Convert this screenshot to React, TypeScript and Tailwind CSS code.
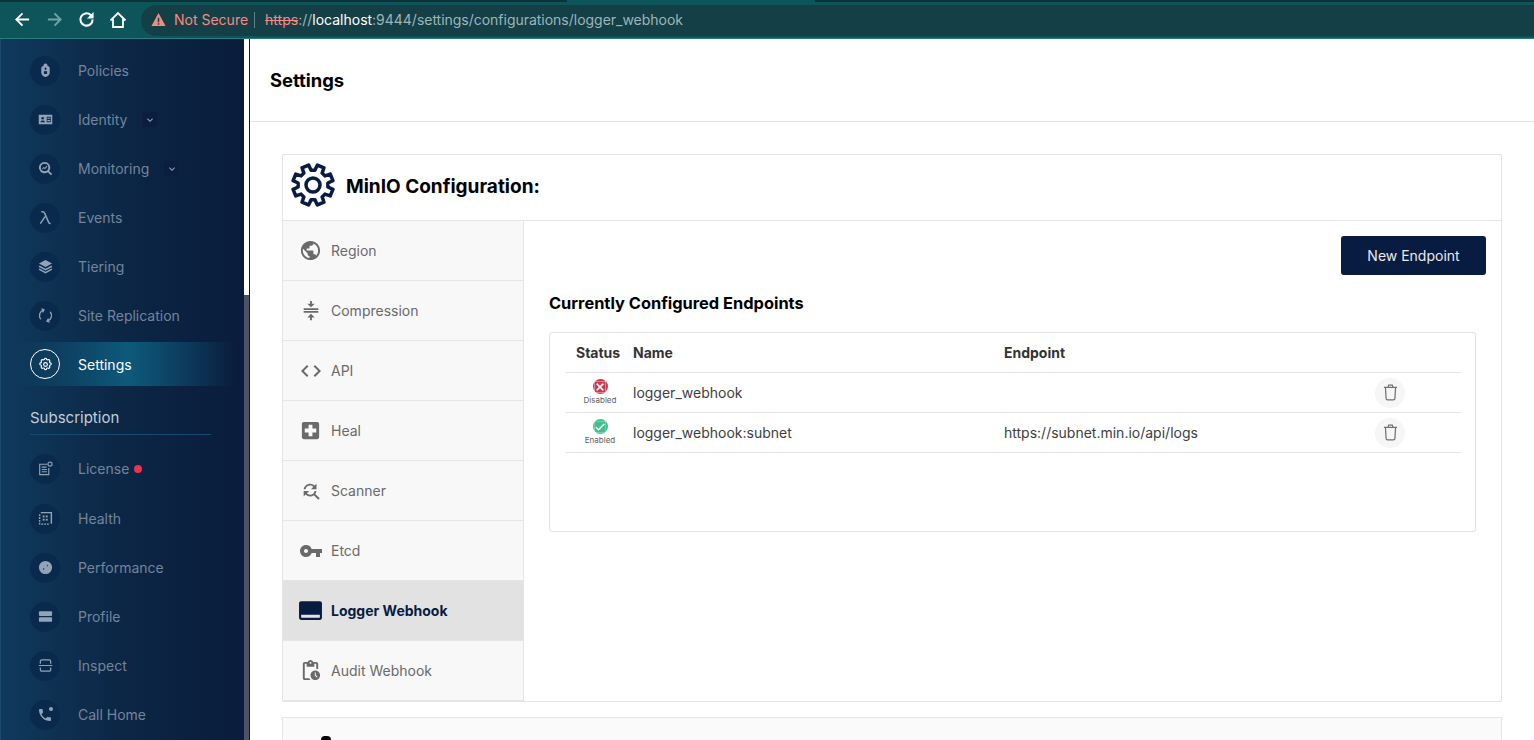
import React from "react";
import {
  MdPublic, MdCompress, MdCode, MdLocalHospital, MdFindReplace, MdVpnKey, MdCallToAction, MdPendingActions,
  MdExpandMore, MdPhone, MdCheck, MdClose,
} from "react-icons/md";

const Svg = ({ children }: { children: React.ReactNode }) => (
  <svg viewBox="0 0 16 16" className="w-[15px] h-[15px]" fill="currentColor">{children}</svg>
);

const PolicyIcon = () => (
  <Svg>
    <path d="M5.800 2.800a2.200 2.200 0 0 1 4.400 0V3.300c1.400.4 2.300 1.200 2.300 2.300v4.900c0 2.600-2.300 3.900-4.500 4.500-2.200-.6-4.500-1.900-4.500-4.500V5.600c0-1.100.9-1.900 2.300-2.300z" />
    <rect x="7" y="4.800" width="2" height="2.600" rx="1" fill="#0b2c50" />
    <rect x="6.300" y="8.700" width="3.400" height="3" fill="#0b2c50" />
  </Svg>
);
const IdentityIcon = () => (
  <Svg>
    <path fillRule="evenodd" d="M.8 3h14.400v10H.8zM9.300 5v6h4.400V5z" />
    <circle cx="5" cy="6.600" r="1.400" fill="#0b2c50" />
    <path d="M2.600 11c0-2.500 4.800-2.500 4.800 0z" fill="#0b2c50" />
    <path d="M10 6h3v1.200h-3zM10 8.600h3v1.200h-3z" />
  </Svg>
);
const MonitoringIcon = () => (
  <Svg>
    <path fillRule="evenodd" d="M7 1a6 6 0 0 1 4.800 9.600l3.400 3.300-1.400 1.400-3.300-3.400A6 6 0 1 1 7 1zm0 2a4 4 0 1 0 0 8 4 4 0 0 0 0-8z" />
    <path d="M4.300 8.300 6 6.300l1.300 1 2-2.200.8.700-2.700 3-1.300-1-1.100 1.300z" />
  </Svg>
);
const LambdaIcon = () => (
  <svg viewBox="0 0 16 16" className="w-[15px] h-[15px]" fill="none" stroke="currentColor" strokeWidth="1.600">
    <path d="M2.500 14.500 7.500 7M3.500 1.800h1.500c1 0 1.700.5 2.100 1.500L11.300 13c.4 1 1 1.500 2.200 1.500" />
  </svg>
);
const TieringIcon = () => (
  <Svg>
    <path d="M8 1 15 4.800 8 8.600 1 4.800z" />
    <path d="M1.500 6.900 8 10.400l6.500-3.500.7 1.500L8 12.300.8 8.400z" />
    <path d="M1.500 10 8 13.500l6.500-3.500.7 1.500L8 15.400.8 11.500z" />
  </Svg>
);
const SiteRepIcon = () => (
  <svg viewBox="0 0 16 16" className="w-[15px] h-[15px]" fill="none" stroke="currentColor" strokeWidth="1.400">
    <path d="M3 12A6.400 6.400 0 0 1 6 1.900M13 4A6.400 6.400 0 0 1 10 14.100" />
    <path d="M3.600.8 6.400 2 4.800 4.600M12.400 15.200 9.600 14 11.200 11.400" />
  </svg>
);
const SettingsSmallIcon = () => (
  <svg viewBox="0 0 24 24" className="w-[15px] h-[15px]" fill="none" stroke="#fff" strokeWidth="1.800">
    <circle cx="12" cy="12" r="3" />
    <path d="M10.300 3.300c.4-1.800 3-1.800 3.400 0a1.700 1.700 0 0 0 2.600 1.100c1.500-1 3.400.9 2.400 2.400a1.700 1.700 0 0 0 1.100 2.600c1.800.4 1.800 3 0 3.400a1.700 1.700 0 0 0-1.100 2.600c1 1.500-.9 3.400-2.400 2.400a1.700 1.700 0 0 0-2.600 1.100c-.4 1.800-3 1.800-3.400 0a1.700 1.700 0 0 0-2.600-1.100c-1.500 1-3.400-.9-2.400-2.400a1.700 1.700 0 0 0-1.100-2.600c-1.800-.4-1.800-3 0-3.400a1.700 1.700 0 0 0 1.100-2.600c-1-1.500.9-3.400 2.400-2.400a1.700 1.700 0 0 0 2.600-1.100z" />
  </svg>
);
const LicenseIcon = () => (
  <svg viewBox="0 0 16 16" className="w-[15px] h-[15px]" fill="none" stroke="currentColor" strokeWidth="1.200">
    <path d="M10 3.500H1.800v11h9.700V7.500" />
    <path d="M4 6.500h5M4 9h5.500M4 11.500h5.500" />
    <circle cx="12.800" cy="3.300" r="2.200" />
  </svg>
);
const HealthIcon = () => (
  <Svg>
    <path d="M3 1h12v12.500h-1.500V2.500H3z" />
    <path d="M1 3.500h1.500v1.800H1zM1 6.500h1.500v2H1zM1 9.500h1.500v2H1zM1 12.500h1.500v2H1zM3.500 13.200h2v1.400h-2zM6.500 13.200h2v1.400h-2zM9.500 13.200h2v1.400h-2z" />
    <rect x="5" y="4.800" width="2" height="2" />
    <rect x="8.300" y="4.800" width="2" height="2" />
    <rect x="5" y="8.300" width="2" height="2" />
    <rect x="8.300" y="8.300" width="2" height="2" />
  </Svg>
);
const PerformanceIcon = () => (
  <Svg>
    <path fillRule="evenodd" d="M8 1a7 7 0 1 1 0 14A7 7 0 0 1 8 1zM10 5l-.7.500.8 1.300.7-.500zM6 8.700a.8.800 0 1 0 0 1.600.8.800 0 0 0 0-1.600z" />
  </Svg>
);
const ProfileIcon = () => (
  <Svg>
    <rect x="1" y="2.500" width="14" height="5" rx="1" />
    <rect x="1" y="8.700" width="14" height="5" rx="1" />
  </Svg>
);
const InspectIcon = () => (
  <svg viewBox="0 0 16 16" className="w-[15px] h-[15px]" fill="none" stroke="currentColor" strokeWidth="1.300">
    <path d="M2.500 6V3.500a1.500 1.500 0 0 1 1.500-1.500h8a1.500 1.500 0 0 1 1.500 1.500V6M2.500 10v2.500A1.500 1.500 0 0 0 4 14h8a1.500 1.500 0 0 0 1.500-1.500V10M.8 8h14.400" />
  </svg>
);
const CallHomeIcon = () => (
  <span className="relative flex">
    <MdPhone size={16} />
    <span className="absolute right-0 top-0 w-[4px] h-[4px] rounded-full bg-current" />
  </span>
);

const gearPoints = Array.from({ length: 8 }, (_, i) => {
  const t = (i * Math.PI) / 4 + Math.PI / 8;
  const p = (r: number, d: number) => {
    const a = t + (d * Math.PI) / 180;
    return `${(22 + r * Math.cos(a)).toFixed(2)},${(22 + r * Math.sin(a)).toFixed(2)}`;
  };
  return [p(15, -15), p(20.4, -10), p(20.4, 10), p(15, 15)].join(" ");
}).join(" ");

const BigGear = () => (
  <svg viewBox="0 0 44 44" className="w-[44px] h-[44px] mb-[6px] text-[#081c42]" fill="none" stroke="currentColor" strokeWidth="3.500" strokeLinejoin="round">
    <polygon points={gearPoints} />
    <circle cx="22" cy="22" r="7" />
  </svg>
);

type Item = { label: string; icon: React.ReactNode; chevron?: boolean; dot?: boolean; h: string };

const topItems: Item[] = [
  { label: "Policies", icon: <PolicyIcon />, h: "h-[49px]" },
  { label: "Identity", icon: <IdentityIcon />, chevron: true, h: "h-[49px]" },
  { label: "Monitoring", icon: <MonitoringIcon />, chevron: true, h: "h-[49px]" },
  { label: "Events", icon: <LambdaIcon />, h: "h-[49px]" },
  { label: "Tiering", icon: <TieringIcon />, h: "h-[49px]" },
  { label: "Site Replication", icon: <SiteRepIcon />, h: "h-[49px]" },
];
const bottomItems: Item[] = [
  { label: "License", icon: <LicenseIcon />, dot: true, h: "h-[51px]" },
  { label: "Health", icon: <HealthIcon />, h: "h-[49px]" },
  { label: "Performance", icon: <PerformanceIcon />, h: "h-[49px]" },
  { label: "Profile", icon: <ProfileIcon />, h: "h-[49px]" },
  { label: "Inspect", icon: <InspectIcon />, h: "h-[49px]" },
  { label: "Call Home", icon: <CallHomeIcon />, h: "h-[49px]" },
];

const NavRow = ({ item }: { item: Item }) => (
  <div className={`${item.h} flex items-center pl-[29px]`}>
    <span className="w-[30px] h-[30px] rounded-full bg-[#0a2a4d] flex items-center justify-center text-[#93a3b6]">
      {item.icon}
    </span>
    <span className="ml-[18px] text-[14px] text-[#74849b]">{item.label}</span>
    {item.chevron && (
      <span className="ml-[15px] w-[15px] h-[15px] flex items-center justify-center bg-[#0b1e40] rounded-[2px] text-[#8fa0b5]">
        <MdExpandMore size={12} />
      </span>
    )}
    {item.dot && <span className="ml-[5px] mt-[1px] w-[8px] h-[8px] rounded-full bg-[#f0304f]" />}
  </div>
);

const tabs = [
  { label: "Region", icon: <MdPublic size={23} /> },
  { label: "Compression", icon: <MdCompress size={22} /> },
  { label: "API", icon: <MdCode size={24} /> },
  { label: "Heal", icon: <MdLocalHospital size={23} /> },
  { label: "Scanner", icon: <MdFindReplace size={22} /> },
  { label: "Etcd", icon: <MdVpnKey size={24} /> },
  { label: "Logger Webhook", icon: <MdCallToAction size={25} />, active: true },
  { label: "Audit Webhook", icon: <MdPendingActions size={23} /> },
];

const Trash = () => (
  <span className="w-[30px] h-[30px] rounded-full bg-[#f6f6f6] flex items-center justify-center">
    <svg viewBox="0 0 16 18" className="w-[15px] h-[17px]" fill="none" stroke="#707070" strokeWidth="1.300">
      <path d="M1 3.500h14M5.500 3.200 6 1.200h4l.5 2M2.600 3.500l.7 12a1.500 1.500 0 0 0 1.500 1.300h6.400a1.500 1.500 0 0 0 1.500-1.300l.7-12" />
    </svg>
  </span>
);

const Status = ({ ok }: { ok: boolean }) => (
  <div className="w-[67px] flex flex-col items-center pt-[6px] pl-[1px]">
    <span className={`w-[15px] h-[15px] rounded-full flex items-center justify-center text-white ${ok ? "bg-[#42c091]" : "bg-[#c83b51]"}`}>
      {ok ? <MdCheck size={12} stroke="currentColor" strokeWidth={1} /> : <MdClose size={12} stroke="currentColor" strokeWidth={1.5} />}
    </span>
    <span className="text-[8px] leading-[10px] mt-[1px] text-[#5e5e5e]">{ok ? "Enabled" : "Disabled"}</span>
  </div>
);

const Row = ({ name, endpoint, ok }: { name: string; endpoint: string; ok: boolean }) => (
  <div className="h-[40px] flex border-b border-[#e2e2e2] text-[14px] text-[#404040]">
    <Status ok={ok} />
    <span className="w-[371px] leading-[40px]">{name}</span>
    <span className="w-[371px] leading-[40px]">{endpoint}</span>
    <span className="flex-1 flex items-center"><Trash /></span>
  </div>
);

export default function App() {
  return (
    <div className="w-[1534px] h-[740px] overflow-hidden flex flex-col bg-white font-['Inter',sans-serif]">
      {/* browser chrome */}
      <div className="h-[39px] shrink-0 bg-[#0e555b] border-b border-[#2c7c7e] flex flex-col">
        <div className="h-[2px] flex shrink-0">
          <div className="w-[567px] bg-[#0c3338]" />
          <div className="w-[248px]" />
          <div className="flex-1 bg-[#0c3338]" />
        </div>
        <div className="flex-1 flex items-center">
          <div className="flex items-center pl-[14px] gap-[15px] w-[141px] text-white shrink-0 pb-[1px]">
            <svg viewBox="0 0 18 18" className="w-[17px] h-[17px]" fill="none" stroke="currentColor" strokeWidth="2"><path d="M16 9H2.500M9 2.500 2.500 9 9 15.500" /></svg>
            <svg viewBox="0 0 18 18" className="w-[17px] h-[17px] text-[#6fa3a5]" fill="none" stroke="currentColor" strokeWidth="2"><path d="M2 9h13.500M9 2.500 15.500 9 9 15.500" /></svg>
            <svg viewBox="0 0 18 18" className="w-[17px] h-[17px]" fill="none" stroke="currentColor" strokeWidth="2.200"><path d="M15.500 9a6.500 6.500 0 1 1-2.200-4.900L15.500 6.300" /><path d="M16.500 1v7h-7" fill="currentColor" stroke="none" /></svg>
            <svg viewBox="0 0 18 18" className="w-[18px] h-[18px] -ml-[1px]" fill="none" stroke="currentColor" strokeWidth="1.800"><path d="M1.500 9.500 9 2l7.500 7.500M4 8v8h10V8" /></svg>
          </div>
          <div className="flex-1 h-[31px] rounded-l-full bg-[#153f47] flex items-center pl-[10px] pb-[1px] text-[14px] whitespace-nowrap">
            <svg viewBox="0 0 16 16" className="w-[15px] h-[15px] text-[#f28b82]" fill="currentColor"><path fillRule="evenodd" d="M8 1 15.500 15H.5zM7.200 6v5h1.600V6zm0 6v1.500h1.600V12z" /></svg>
            <span className="ml-[8px] text-[#f28b82]">Not Secure</span>
            <span className="ml-[6px] w-px h-[16px] bg-[#5d8588]" />
            <span className="ml-[10px] text-[#f28b82] line-through">https</span>
            <span className="text-[#9cb6b8]">://</span>
            <span className="text-white">localhost</span>
            <span className="text-[#9cb6b8] tracking-[-0.02px]">:9444/settings/configurations/logger_webhook</span>
          </div>
        </div>
      </div>

      <div className="flex-1 flex min-h-0">
        {/* sidebar */}
        <aside className="w-[244px] shrink-0 bg-gradient-to-r from-[#0f3a5c] via-[#0c2645] to-[#0a1c3c] border-l border-[#1c4a6e] pt-[7px] overflow-hidden">
          {topItems.map((i) => <NavRow key={i.label} item={i} />)}
          <div className="mt-[2px] ml-[19px] mr-[10px] h-[44px] flex items-center pl-[10px] bg-gradient-to-r from-transparent via-[#0d5a7c] to-transparent">
            <span className="w-[30px] h-[30px] rounded-full border border-white flex items-center justify-center">
              <SettingsSmallIcon />
            </span>
            <span className="ml-[18px] text-[14px] text-white">Settings</span>
          </div>
          <div className="ml-[29px] mr-[33px] mt-[22px] h-[27px] border-b border-[#144a73] text-[15px] leading-[19px] text-[#c2cedb]">Subscription</div>
          <div className="h-[8px]" />
          {bottomItems.map((i) => <NavRow key={i.label} item={i} />)}
        </aside>

        {/* scrollbar */}
        <div className="w-[5px] shrink-0 flex flex-col">
          <div className="h-[256px] bg-white" />
          <div className="flex-1 bg-[#4d5268]" />
        </div>
        <div className="w-px shrink-0 bg-[#0a1c3c]" />

        {/* main */}
        <main className="flex-1 min-w-0 overflow-hidden">
          <div className="h-[83px] border-b border-[#e5e5e5] pl-[20px] pt-[2px] flex items-center">
            <h1 className="text-[18.4px] font-bold text-black">Settings</h1>
          </div>
          <div className="pt-[32px] pl-[32px] pr-[32px]">
            <section className="border border-[#e5e5e5] rounded-[2px] h-[548px] flex flex-col">
              <div className="h-[66px] shrink-0 border-b border-[#e5e5e5] flex items-center pl-[8px]">
                <BigGear />
                <span className="ml-[11px] text-[19px] font-bold text-black">MinIO Configuration:</span>
              </div>
              <div className="flex-1 flex min-h-0">
                <nav className="w-[241px] shrink-0 border-r border-[#e5e5e5] bg-[#f8f8f8]">
                  {tabs.map((t) => (
                    <div
                      key={t.label}
                      className={`h-[60px] flex items-center border-b border-[#e5e5e5] ${t.active ? "bg-[#e2e2e2] text-[#081c42] font-bold" : "text-[#6a6a6a]"}`}
                    >
                      <span className="w-[48px] flex justify-center items-center pl-[7px]">{t.icon}</span>
                      <span className="text-[14px]">{t.label}</span>
                    </div>
                  ))}
                </nav>
                <div className="flex-1 min-w-0 pl-[25px] pr-[15px] pt-[15px]">
                  <div className="flex justify-end">
                    <button className="w-[145px] h-[39px] rounded-[3px] bg-[#081c42] text-[#e8eaee] text-[14px]">New Endpoint</button>
                  </div>
                  <h2 className="mt-[18px] text-[16.4px] leading-[20px] font-bold text-black">Currently Configured Endpoints</h2>
                  <div className="mt-[19px] w-[927px] h-[200px] border border-[#e2e2e2] rounded-[3px] pl-[16px] pr-[14px]">
                    <div className="h-[40px] flex items-center border-b border-[#e2e2e2] text-[14px] font-bold text-[#333]">
                      <span className="w-[67px] pl-[10px]">Status</span>
                      <span className="w-[371px]">Name</span>
                      <span>Endpoint</span>
                    </div>
                    <Row name="logger_webhook" endpoint="" ok={false} />
                    <Row name="logger_webhook:subnet" endpoint="https://subnet.min.io/api/logs" ok={true} />
                  </div>
                </div>
              </div>
            </section>
            <section className="mt-[15px] h-[60px] border border-[#e5e5e5] bg-[#fafafa] pl-[32px] pt-[18px]">
              <span className="block w-[10px] h-[4px] bg-black rounded-t-full ml-[6px]" />
            </section>
          </div>
        </main>
      </div>
    </div>
  );
}
